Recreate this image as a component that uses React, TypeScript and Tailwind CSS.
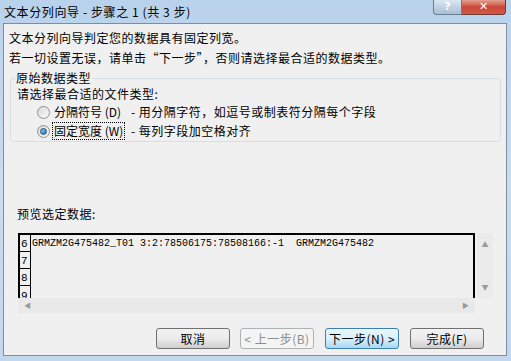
import React from 'react';

const cjk = { fontFamily: '"Noto Sans CJK SC", "Noto Sans", sans-serif' };
const mono = { fontFamily: '"Liberation Mono", "DejaVu Sans Mono", monospace' };

const Radio: React.FC<{ checked?: boolean }> = ({ checked }) => (
  <span className="relative inline-flex h-[13px] w-[13px] shrink-0 items-center justify-center rounded-full border border-[#8f8f8f] bg-gradient-to-br from-[#d8d8d8] to-[#fbfbfb]">
    {checked && (
      <span className="h-[7px] w-[7px] rounded-full border border-[#1c5180] bg-gradient-to-br from-[#8ed0f8] to-[#1f6fb5]" />
    )}
  </span>
);

interface BtnProps {
  label: string;
  variant?: 'normal' | 'disabled' | 'focus';
}

const DialogButton: React.FC<BtnProps> = ({ label, variant = 'normal' }) => {
  const cls =
    variant === 'disabled'
      ? 'border-[#adb2b5] bg-[#f4f4f4] text-[#8d8d8d]'
      : variant === 'focus'
      ? 'border-[#3c7fb1] bg-gradient-to-b from-[#eaf6fd] via-[#d9f0fc] to-[#a7d9f5] text-black'
      : 'border-[#707070] bg-gradient-to-b from-[#f2f2f2] via-[#ebebeb] to-[#cfcfcf] text-black';
  return (
    <div
      className={`flex h-[21px] w-[74px] items-center justify-center rounded-[3px] border text-[12px] tracking-[0.5px] ${cls}`}
      style={cjk}
    >
      {label}
    </div>
  );
};

const rows = ['6', '7', '8', '9'];

export default function App() {
  return (
    <div className="flex h-[361px] w-[511px] flex-col bg-gradient-to-b from-[#b9d2ec] via-[#c9dcf0] to-[#c3d8ee] pb-[5px] pl-[3px] pr-[4px]">
      {/* title bar */}
      <div className="relative flex h-[23px] shrink-0 items-center">
        <span className="pl-[1px] text-[12px] tracking-[0.6px] text-black" style={cjk}>
          文本分列向导 - 步骤之 1 (共 3 步)
        </span>
        <div className="absolute right-[1px] top-0 flex">
          <div className="flex h-[15px] w-[29px] items-center justify-center rounded-bl-[4px] border border-t-0 border-[#6b7d92] bg-gradient-to-b from-[#dbe6f2] to-[#a9bed5] text-[11px] font-bold text-white" style={{ fontFamily: '"DejaVu Sans", sans-serif' }}>
            ?
          </div>
          <div className="flex h-[15px] w-[44px] items-center justify-center rounded-br-[4px] border border-l-0 border-t-0 border-[#6b3a36] bg-gradient-to-b from-[#e3a092] via-[#c9473a] to-[#d45a44] text-[11px] font-bold text-white" style={{ fontFamily: '"DejaVu Sans", sans-serif' }}>
            ✕
          </div>
        </div>
      </div>

      {/* client area */}
      <div className="flex flex-1 flex-col border border-[#7d8ea3] bg-[#f0f0f0] text-[12px] tracking-[0.5px] text-black" style={cjk}>
        <div className="mt-[4px] pl-[5px] leading-[20px]">
          <div>文本分列向导判定您的数据具有固定列宽。</div>
          <div>若一切设置无误，请单击“下一步”，否则请选择最合适的数据类型。</div>
        </div>

        <fieldset className="ml-[6px] mt-[3px] w-[491px] rounded-[3px] border border-[#d5dfe5] pb-[1px] pl-[6px]">
          <legend className="ml-[-2px] px-[1px] leading-[14px]">原始数据类型</legend>
          <div className="leading-[18px]">请选择最合适的文件类型:</div>
          <div className="ml-[20px] flex h-[18px] items-center">
            <Radio />
            <span className="ml-[4px] w-[77px] shrink-0 tracking-normal">分隔符号 (D)</span>
            <span>- 用分隔字符，如逗号或制表符分隔每个字段</span>
          </div>
          <div className="ml-[20px] mt-[1px] flex h-[18px] items-center">
            <Radio checked />
            <span className="ml-[2px] w-[79px] shrink-0 tracking-normal">
              <span className="inline-block border border-dotted border-black px-[1px] leading-[16px]">固定宽度 (W)</span>
            </span>
            <span>- 每列字段加空格对齐</span>
          </div>
        </fieldset>

        <div className="ml-[13px] mt-[63px] leading-[18px]">预览选定数据:</div>

        <div className="ml-[14px] mt-[10px] flex w-[475px] flex-col tracking-normal">
          <div className="flex h-[65px]">
            <div className="flex flex-1 overflow-hidden border-l-2 border-r-2 border-t-2 border-black bg-[#f0f0f0]">
              <div className="flex w-[11px] shrink-0 flex-col border-r border-black">
                {rows.map((r, i) => (
                  <div
                    key={r}
                    className={`flex h-[17px] shrink-0 items-end pl-[1px] text-[11px] leading-[14px] ${i < 3 ? 'border-b border-black' : ''}`}
                    style={mono}
                  >
                    {r}
                  </div>
                ))}
              </div>
              <div className="pl-[1px] pt-[2px] text-[10px] leading-[14px] whitespace-pre" style={mono}>
                GRMZM2G475482_T01 3:2:78506175:78508166:-1  GRMZM2G475482
              </div>
            </div>
            <div className="ml-[2px] flex w-[16px] flex-col items-center justify-between bg-[#ebebeb] py-[6px] text-[7px] text-[#9a9a9a]">
              <span>▲</span>
              <span>▼</span>
            </div>
          </div>
          <div className="flex h-[15px] w-[457px] items-center justify-between bg-[#e9e9e9] px-[6px] text-[7px] text-[#9a9a9a]">
            <span>◀</span>
            <span>▶</span>
          </div>
        </div>

        <div className="mt-[15px] flex pl-[152px]">
          <DialogButton label="取消" />
          <div className="ml-[10px]">
            <DialogButton label="< 上一步(B)" variant="disabled" />
          </div>
          <div className="ml-[11px]">
            <DialogButton label="下一步(N) >" variant="focus" />
          </div>
          <div className="ml-[11px]">
            <DialogButton label="完成(F)" />
          </div>
        </div>
      </div>
    </div>
  );
}
